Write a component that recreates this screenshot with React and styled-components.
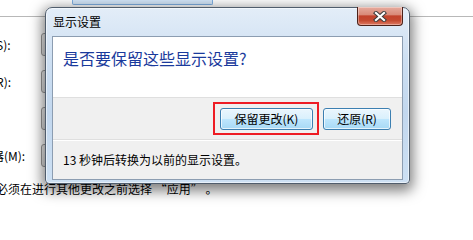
import React from 'react';
import styled, { createGlobalStyle } from 'styled-components';

const GlobalStyle = createGlobalStyle`
  html, body {
    margin: 0;
    padding: 0;
    background: #fff;
    overflow: hidden;
  }
  body {
    font-family: "Noto Sans CJK SC", "Liberation Sans", sans-serif;
    font-size: 12px;
    color: #000;
  }
`

const Desktop = styled.div`
  position: relative;
  width: 473px;
  height: 225px;
  overflow: hidden;
  background: #fff;
`

/* control panel page that sits behind the dialog */
const Page = styled.div`
  display: flex;
  flex-direction: column;
  margin-left: -44px;
  width: 560px;
`
const MonitorTile = styled.div`
  margin-left: 116px;
  width: 139px;
  height: 4px;
  border: 1px solid #7fb0e3;
  border-top: none;
  border-radius: 0 0 2px 2px;
  background: #d4e7fa;
`
const Divider = styled.div`
  margin-top: 11px;
  height: 1px;
  background: #b8b8b8;
`
const Rows = styled.div`
  display: flex;
  flex-direction: column;
  gap: 14px;
  margin-top: 16px;
`
const Row = styled.div`
  display: flex;
  align-items: center;
  height: 23px;
`
const Label = styled.span`
  width: 85px;
  flex-shrink: 0;
  line-height: 14px;
  white-space: nowrap;
`
const Combo = styled.div`
  width: 250px;
  height: 21px;
  border: 1px solid #9c9c9c;
  border-radius: 3px;
  background: linear-gradient(#f4f4f4, #e2e2e2);
`
const Note = styled.div`
  margin-top: 15px;
  padding-left: 40px;
  line-height: 14px;
  white-space: nowrap;
`

/* the task dialog window */
const Window = styled.div`
  position: absolute;
  left: 45px;
  top: 7px;
  width: 365px;
  height: 177px;
  box-sizing: border-box;
  display: flex;
  flex-direction: column;
  padding: 0 6px 3px 6px;
  border: 1px solid #505d6c;
  border-radius: 7px 7px 4px 4px;
  background: linear-gradient(#e3edf8 0%, #cddff2 30%, #c2d7ee 60%, #cde0f3 100%);
  box-shadow: inset 0 0 0 1px rgba(255,255,255,0.55), 0 4px 13px 3px rgba(0,0,0,0.5);
`
const TitleBar = styled.div`
  display: flex;
  justify-content: space-between;
  align-items: flex-start;
  height: 28px;
  flex-shrink: 0;
`
const Title = styled.span`
  align-self: center;
  margin-left: 1px;
  line-height: 14px;
  color: #000;
`
const CloseButton = styled.div`
  display: flex;
  align-items: center;
  justify-content: center;
  width: 44px;
  height: 18px;
  margin-top: -1px;
  border: 1px solid #4b2119;
  border-top: none;
  border-radius: 0 0 4px 4px;
  background: linear-gradient(#e6ab9e 0%, #d98b79 42%, #c2432c 50%, #c44a31 75%, #de7a63 100%);
  box-shadow: inset 0 0 0 1px rgba(255,255,255,0.35);
`
const Client = styled.div`
  flex: 1;
  display: flex;
  flex-direction: column;
  border: 1px solid #8c9db1;
  background: #f0f0f0;
`
const Content = styled.div`
  height: 61px;
  padding: 10px 0 0 10px;
  box-sizing: border-box;
  background: #fff;
  border-bottom: 1px solid #dfdfdf;
`
const Instruction = styled.div`
  font-size: 16px;
  line-height: 22px;
  color: #1a3a9c;
`
const ButtonBar = styled.div`
  display: flex;
  justify-content: flex-end;
  align-items: center;
  gap: 4px;
  height: 41px;
  padding-right: 11px;
  border-bottom: 1px solid #dfdfdf;
  box-shadow: 0 1px 0 #fff;
`
const Highlight = styled.div`
  display: flex;
  padding: 4px 4px 3px 5px;
  border: 2px solid #ee1c24;
`
const Button = styled.button`
  width: ${p => p.$w}px;
  height: 22px;
  padding: 0;
  border: 1px solid #3c7fb1;
  border-radius: 3px;
  background: linear-gradient(#eaf6fd 0%, #d9f0fc 50%, #bee6fd 51%, #a7d9f5 100%);
  box-shadow: inset 0 0 0 1px rgba(255,255,255,0.7);
  font-family: inherit;
  font-size: 12px;
  line-height: 14px;
  color: #000;
`
const Footer = styled.div`
  flex: 1;
  display: flex;
  align-items: center;
  padding-left: 10px;
  line-height: 14px;
`

function CloseGlyph() {
  return (
    <svg width="14" height="11" viewBox="0 0 14 11">
      <path d="M3 2 L11 9 M11 2 L3 9" stroke="#3d3d3d" strokeWidth="4.2" strokeLinecap="square" />
      <path d="M3 2 L11 9 M11 2 L3 9" stroke="#fff" strokeWidth="2.2" strokeLinecap="square" />
    </svg>
  );
}

const rows = ['显示器(S):', '分辨率(R):', '方向(O):', '多显示器(M):'];

function App() {
  return (
    <Desktop>
      <GlobalStyle />
      <Page>
        <MonitorTile />
        <Divider />
        <Rows>
          {rows.map(r => (
            <Row key={r}>
              <Label>{r}</Label>
              <Combo />
            </Row>
          ))}
        </Rows>
        <Note>必须在进行其他更改之前选择 “应用” 。</Note>
      </Page>
      <Window>
        <TitleBar>
          <Title>显示设置</Title>
          <CloseButton><CloseGlyph /></CloseButton>
        </TitleBar>
        <Client>
          <Content>
            <Instruction>是否要保留这些显示设置?</Instruction>
          </Content>
          <ButtonBar>
            <Highlight>
              <Button $w={93}>保留更改(K)</Button>
            </Highlight>
            <Button $w={68}>还原(R)</Button>
          </ButtonBar>
          <Footer>13 秒钟后转换为以前的显示设置。</Footer>
        </Client>
      </Window>
    </Desktop>
  );
}

export default React.memo(App);
